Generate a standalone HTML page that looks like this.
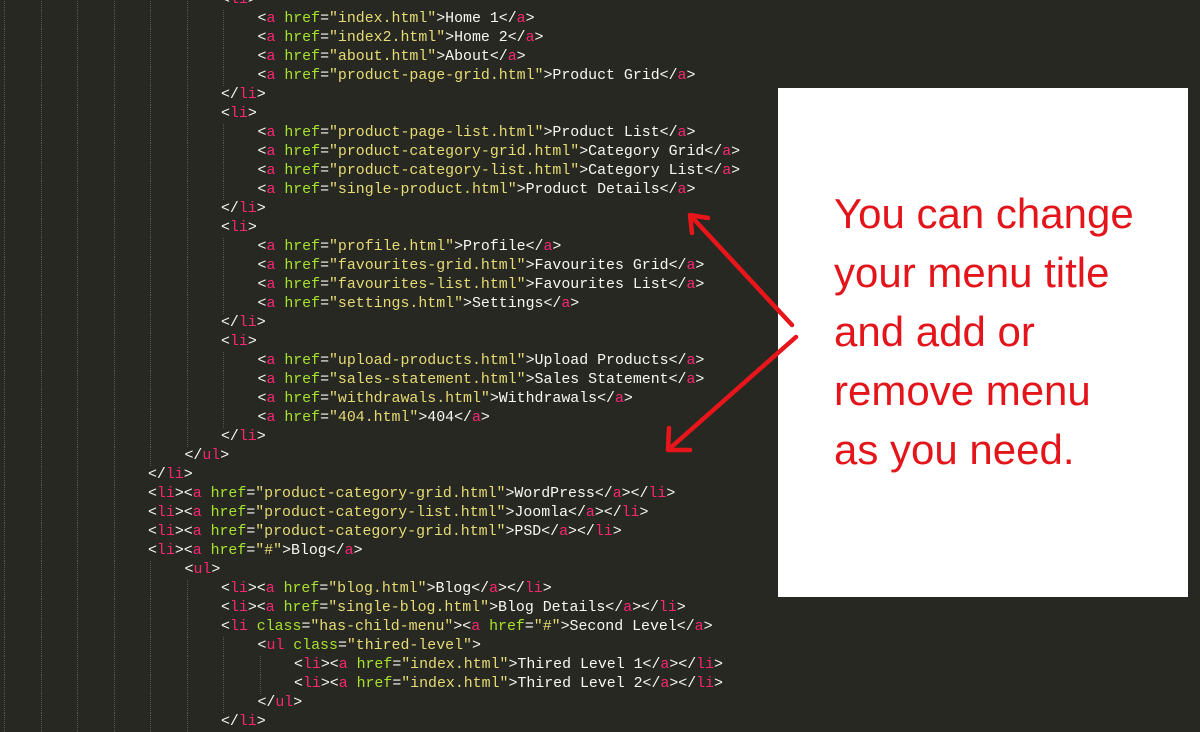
<!DOCTYPE html>
<html><head><meta charset="utf-8"><style>
html,body{margin:0;padding:0;width:1200px;height:728px;overflow:hidden;background:#272822}
#code{position:absolute;left:0;top:0;width:1200px;height:728px}
.ln{position:absolute;left:0;height:19px;line-height:19px;white-space:pre;font-family:"Liberation Mono",monospace;font-size:14.9px;color:#f8f8f2}
.g{position:absolute;width:0;border-left:1px dotted #55564e;height:19px}
.t{color:#f92672}.a{color:#a6e22e}.s{color:#e6db74}
#box{position:absolute;left:778px;top:88px;width:410px;height:509px;background:#fff}
#msg{position:absolute;left:834px;top:184px;font-family:"Liberation Sans",sans-serif;font-size:42px;line-height:59px;color:#e3151a;white-space:pre}
svg{position:absolute;left:0;top:0}
</style></head><body>
<div id="code"></div>
<div id="box"></div>
<div id="msg">You can change
your menu title
and add or
remove menu
as you need.</div>
<svg width="1200" height="728"><g stroke="#e8161b" stroke-width="4.5" stroke-linecap="round" fill="none">
<path d="M792 325 L690 215 M690 215 L692 233 M690 215 L708 218"/>
<path d="M796 337 L668 450 M668 450 L669 428 M668 450 L690 450"/>
</g></svg>
<script>
function esc(s){return s.replace(/&/g,'&amp;').replace(/</g,'&lt;').replace(/>/g,'&gt;')}
function A(h,t){return '&lt;<span class="t">a</span> <span class="a">href</span>=<span class="s">"'+h+'"</span>&gt;'+esc(t)+'&lt;/<span class="t">a</span>&gt;'}
function O(n){return '&lt;<span class="t">'+n+'</span>&gt;'}
function C(n){return '&lt;/<span class="t">'+n+'</span>&gt;'}
function LA(h,t){return O('li')+A(h,t)+C('li')}
var L=[
[6,O('li')],
[7,A('index.html','Home 1')],[7,A('index2.html','Home 2')],[7,A('about.html','About')],[7,A('product-page-grid.html','Product Grid')],
[6,C('li')],[6,O('li')],
[7,A('product-page-list.html','Product List')],[7,A('product-category-grid.html','Category Grid')],[7,A('product-category-list.html','Category List')],[7,A('single-product.html','Product Details')],
[6,C('li')],[6,O('li')],
[7,A('profile.html','Profile')],[7,A('favourites-grid.html','Favourites Grid')],[7,A('favourites-list.html','Favourites List')],[7,A('settings.html','Settings')],
[6,C('li')],[6,O('li')],
[7,A('upload-products.html','Upload Products')],[7,A('sales-statement.html','Sales Statement')],[7,A('withdrawals.html','Withdrawals')],[7,A('404.html','404')],
[6,C('li')],[5,C('ul')],[4,C('li')],
[4,LA('product-category-grid.html','WordPress')],[4,LA('product-category-list.html','Joomla')],[4,LA('product-category-grid.html','PSD')],
[4,O('li')+A('#','Blog')],
[5,O('ul')],
[6,LA('blog.html','Blog')],[6,LA('single-blog.html','Blog Details')],
[6,'&lt;<span class="t">li</span> <span class="a">class</span>=<span class="s">"has-child-menu"</span>&gt;'+A('#','Second Level')],
[7,'&lt;<span class="t">ul</span> <span class="a">class</span>=<span class="s">"thired-level"</span>&gt;'],
[8,LA('index.html','Thired Level 1')],[8,LA('index.html','Thired Level 2')],
[7,C('ul')],[6,C('li')]
];
var out='';
for(var i=0;i<L.length;i++){
 var lv=L[i][0],yy=i*19-9;
 for(var k=0;k<lv;k++){out+='<div class="g" style="left:'+(4+36.5*k)+'px;top:'+yy+'px"></div>';}
 out+='<div class="ln" style="top:'+yy+'px;left:'+(2+36.5*lv)+'px">'+L[i][1]+'</div>';
}
document.getElementById('code').innerHTML=out;
</script>
</body></html>
